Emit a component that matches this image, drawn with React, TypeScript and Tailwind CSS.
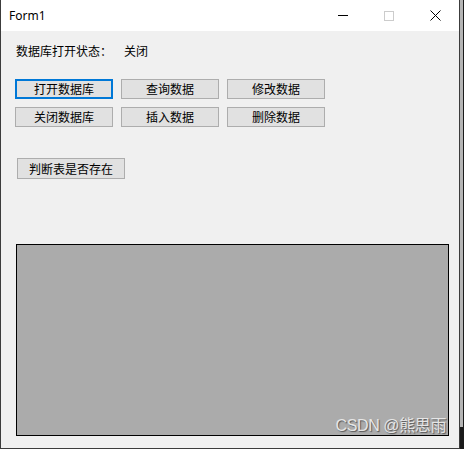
import React from 'react';

const rows = [
  ['打开数据库', '查询数据', '修改数据'],
  ['关闭数据库', '插入数据', '删除数据'],
];

const font = { fontFamily: '"Noto Sans CJK SC", "Noto Sans", sans-serif' };

const WinButton = ({ label, focused }: { label: string; focused?: boolean }) => (
  <button
    className={`w-[98px] h-[20px] bg-[#e1e1e1] text-[12px] leading-none text-black flex items-center justify-center ${
      focused ? 'border-2 border-[#0078d7]' : 'border border-[#adadad]'
    }`}
  >
    {label}
  </button>
);

export default function App() {
  return (
    <div className="w-[464px] h-[449px] flex bg-[#f0f0f0]" style={font}>
      <div className="w-[460px] h-[449px] flex flex-col border-l border-r border-b border-[#3c3c3c]">
        {/* title bar */}
        <div className="h-[31px] bg-white flex items-center shrink-0">
          <span className="ml-[8px] text-[12px] text-black" style={{ fontFamily: '"Noto Sans", sans-serif' }}>
            Form1
          </span>
          <div className="ml-auto flex items-center h-full">
            <div className="w-[46px] h-full flex items-center justify-center">
              <div className="w-[10px] h-px bg-black" />
            </div>
            <div className="w-[46px] h-full flex items-center justify-center">
              <div className="w-[10px] h-[10px] border border-[#cccccc]" />
            </div>
            <div className="w-[46px] h-full flex items-center justify-center mr-[1px]">
              <svg width="11" height="11" viewBox="0 0 11 11">
                <path d="M0.5 0.5 L10.5 10.5 M10.5 0.5 L0.5 10.5" stroke="#000" strokeWidth="1" />
              </svg>
            </div>
          </div>
        </div>

        {/* client area */}
        <div className="flex-1 flex flex-col bg-[#f0f0f0] text-black">
          <div className="mt-[12px] pl-[15px] flex text-[12px] leading-[16px]">
            <span className="w-[108px]">数据库打开状态：</span>
            <span>关闭</span>
          </div>

          <div className="mt-[20px] pl-[14px] flex flex-col gap-[8px]">
            {rows.map((row, i) => (
              <div key={i} className="flex gap-[8px]">
                {row.map((label, j) => (
                  <WinButton key={label} label={label} focused={i === 0 && j === 0} />
                ))}
              </div>
            ))}
          </div>

          <div className="mt-[31px] pl-[16px]">
            <button className="w-[108px] h-[21px] bg-[#e1e1e1] border border-[#adadad] text-[12px] leading-none flex items-center justify-center">
              判断表是否存在
            </button>
          </div>

          <div className="mt-[65px] ml-[15px] relative w-[433px] h-[192px] bg-[#ababab] border border-black">
            <span
              className="absolute right-[2px] bottom-[-3px] text-[16px] text-[#e6e6e6] tracking-tight"
              style={{ textShadow: '1px 1px 1px #555', fontFamily: '"Liberation Sans", "Noto Sans CJK SC", sans-serif' }}
            >
              CSDN @熊思雨
            </span>
          </div>
        </div>
      </div>
      <div className="w-[4px] h-[449px] flex flex-col">
        <div className="flex-1 bg-[#b4b4b4] border-r border-[#1a1a1a]" />
        <div className="h-[22px] bg-[#1a1a1a]" />
      </div>
    </div>
  );
}
